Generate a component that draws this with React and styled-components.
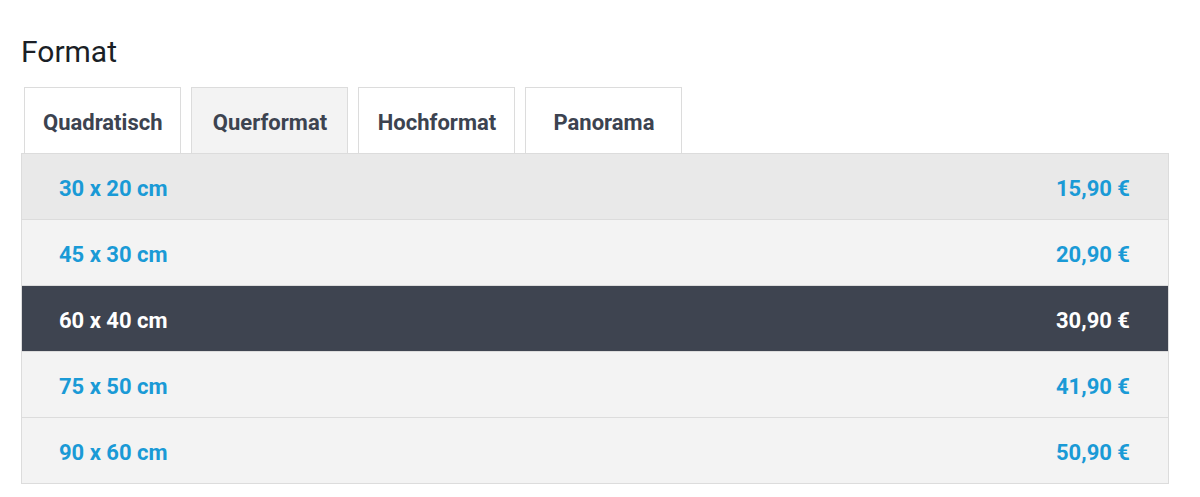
import React, { useState } from 'react'
import styled, { createGlobalStyle } from 'styled-components'

const GlobalStyle = createGlobalStyle`
  body {
    margin: 0;
    background: #fff;
    font-family: Roboto, "Liberation Sans", Arial, sans-serif;
  }
`

const TABS = ['Quadratisch', 'Querformat', 'Hochformat', 'Panorama']

const SIZES = [
  { size: '30 x 20 cm', price: '15,90 €' },
  { size: '45 x 30 cm', price: '20,90 €' },
  { size: '60 x 40 cm', price: '30,90 €' },
  { size: '75 x 50 cm', price: '41,90 €' },
  { size: '90 x 60 cm', price: '50,90 €' },
]

const App = () => {
  const [tab, setTab] = useState(1)
  const [selected, setSelected] = useState(2)

  return (
    <Page>
      <GlobalStyle />
      <Title>Format</Title>
      <TabBar>
        {TABS.map((name, i) => (
          <Tab key={name} active={i === tab} onClick={() => setTab(i)}>
            {name}
          </Tab>
        ))}
      </TabBar>
      <Panel>
        {SIZES.map((row, i) => (
          <Row
            key={row.size}
            selected={i === selected}
            hovered={i === 0}
            onClick={() => setSelected(i)}
          >
            <span>{row.size}</span>
            <span>{row.price}</span>
          </Row>
        ))}
      </Panel>
    </Page>
  )
}

export default App

const Page = styled.div`
  padding: 35px 31px 0 21px;
`

const Title = styled.h2`
  margin: 0 0 18px;
  font-size: 30px;
  line-height: 34px;
  font-weight: 400;
  color: #1b1f26;
`

const TabBar = styled.div`
  display: flex;
  gap: 10px;
  margin-left: 3px;
`

const Tab = styled.button`
  box-sizing: border-box;
  height: 66px;
  min-width: 157px;
  padding: 3px 18px 0;
  border: 1px solid #dcdcdc;
  border-bottom: none;
  background: ${p => (p.active ? '#f3f3f3' : '#fff')};
  font-family: inherit;
  font-size: 22px;
  font-weight: 700;
  color: #3c4350;
  cursor: pointer;
`

const Panel = styled.div`
  border: 1px solid #dcdcdc;
  border-bottom: none;
`

const Row = styled.div`
  box-sizing: border-box;
  display: flex;
  justify-content: space-between;
  align-items: center;
  height: 66px;
  padding: 3px 38px 0 37px;
  border-bottom: 1px solid #dcdcdc;
  background: ${p => (p.selected ? '#3e4450' : p.hovered ? '#e9e9e9' : '#f3f3f3')};
  color: ${p => (p.selected ? '#fff' : '#1a9ad6')};
  font-size: 22px;
  font-weight: 700;
  cursor: pointer;
`
